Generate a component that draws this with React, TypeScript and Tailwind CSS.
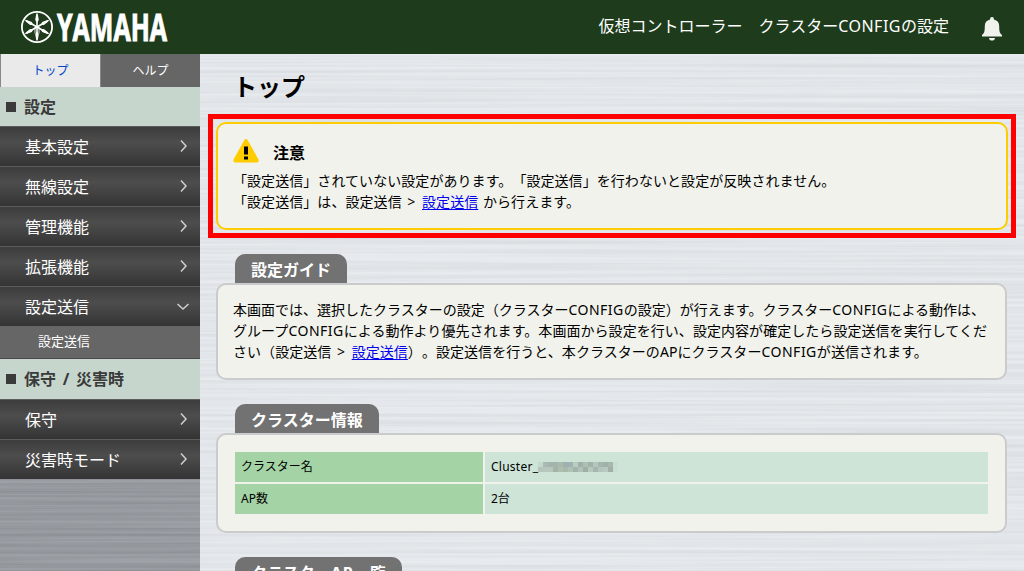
import React from "react";

const items = ["基本設定", "無線設定", "管理機能", "拡張機能", "設定送信"];
const lowerItems = ["保守", "災害時モード"];

function Chevron({ down = false }: { down?: boolean }) {
  return (
    <svg width="14" height="14" viewBox="0 0 14 14" fill="none" stroke="#cfcfcf" strokeWidth="1.5" className="mb-[2px]">
      {down ? <path d="M1.5 5 7 10l5.500-5" /> : <path d="M5 1.5 10 7l-5 5.5" />}
    </svg>
  );
}

function MenuItem({ label, open = false }: { label: string; open?: boolean }) {
  return (
    <div className="flex h-10 items-center justify-between border-t border-[#5c5c5c] bg-linear-to-b from-[#3d3d3d] via-[#4d4d4d] via-40% to-[#343434] pr-[10px] pl-[25px] text-base text-white">
      <span>{label}</span>
      <Chevron down={open} />
    </div>
  );
}

function Section({ label }: { label: string }) {
  return (
    <div className="flex items-center bg-[#c6d6cc] pl-[6px] text-base font-bold text-[#3a3a3a]">
      <span className="mr-[8px] size-[10px] bg-[#3a3a3a]" />
      <span className="whitespace-pre [word-spacing:2.5px]">{label}</span>
    </div>
  );
}

function Brushed({ id, base, opacity }: { id: string; base: string; opacity: number }) {
  return (
    <svg className="absolute inset-0 h-full w-full" preserveAspectRatio="none">
      <defs>
        <filter id={id} x="0" y="0" width="100%" height="100%" colorInterpolationFilters="sRGB">
          <feTurbulence type="fractalNoise" baseFrequency="0.002 0.3" numOctaves="3" seed="8" />
          <feColorMatrix type="matrix" values="1.6 0 0 0 -0.1  1.6 0 0 0 -0.1  1.6 0 0 0 -0.1  0 0 0 0 1" />
        </filter>
      </defs>
      <rect width="100%" height="100%" fill={base} />
      <rect width="100%" height="100%" filter={`url(#${id})`} opacity={opacity} />
    </svg>
  );
}

function Tab({ label }: { label: React.ReactNode }) {
  return (
    <h2 className="ml-[19px] flex h-[29px] w-fit items-center rounded-t-[10px] bg-[#727272] px-4 pt-[3px] text-base font-bold whitespace-nowrap text-white">
      {label}
    </h2>
  );
}

function Link({ children }: { children: React.ReactNode }) {
  return (
    <a href="#" className="text-[#0000ee] underline decoration-1 underline-offset-2">
      {children}
    </a>
  );
}

function Config() {
  return <span className="tracking-[0.5px]">CONFIG</span>;
}

function Gt() {
  return <span className="px-px tracking-[1px]"> &gt; </span>;
}

function Logo() {
  return (
    <svg width="160" height="54" viewBox="0 0 160 54">
      <g fill="none" stroke="#fff">
        <circle cx="17" cy="27" r="15.1" strokeWidth="1.8" />
        {[0, 60, 120, 180, 240, 300].map((a) => (
          <g key={a} transform={`rotate(${a} 17 27)`}>
            <path d="M17 27V15" strokeWidth="1.6" />
            <path d="M16.300 13.500h1.400l1.100 6.500-1.800 2.500-1.800-2.500z" fill="#fff" stroke="none" />
          </g>
        ))}
        <path d="M15 27v6.500M19 27v6.500" strokeWidth="0.8" />
      </g>
      <text
        x="37"
        y="41"
        fill="#fff"
        stroke="#fff"
        strokeWidth="1"
        fontFamily="Open Sans, sans-serif"
        fontWeight="700"
        fontSize="38"
        textLength="110"
        lengthAdjust="spacingAndGlyphs"
      >
        YAMAHA
      </text>
    </svg>
  );
}

export default function App() {
  return (
    <div className="flex h-[571px] w-[1024px] flex-col overflow-hidden font-['Noto_Sans','Noto_Sans_CJK_JP',sans-serif] text-black [text-spacing-trim:space-all]">
      <header className="flex h-[54px] shrink-0 items-center justify-between bg-[#1e3c1c] pr-[21px] pl-5">
        <Logo />
        <div className="flex items-center gap-[32px] text-base whitespace-nowrap text-white">
          <span className="-mt-[2px]">仮想コントローラー　クラスター<Config />の設定</span>
          <svg width="22" height="26" viewBox="0 0 22 26" fill="#f1f2eb" className="mt-[3px]">
            <path d="M11 1c1.200 0 1.900.8 1.900 1.900v.6c3.600.8 5.300 3.300 5.300 6.700 0 4.800.4 6.800 2.800 8.800v1.500H1V19c2.400-2 2.800-4 2.800-8.800 0-3.400 1.700-5.900 5.300-6.700v-.6C9.100 1.800 9.800 1 11 1zM8 22h6c-.3 1.800-1.400 2.600-3 2.600S8.300 23.800 8 22z" />
          </svg>
        </div>
      </header>
      <div className="flex min-h-0 flex-1">
        <aside className="relative w-[200px] shrink-0 overflow-hidden">
          <Brushed id="brush-dark" base="#93979d" opacity={0.1} />
          <nav className="relative">
            <div className="flex h-[33px] text-xs">
              <div className="flex w-[100px] items-center justify-center border-l border-[#888] bg-[#eaeaea] text-[#0047c8]">トップ</div>
              <div className="flex w-[100px] items-center justify-center border-l border-[#888] bg-[#666] text-white">ヘルプ</div>
            </div>
            <div className="grid h-[39px]"><Section label="設定" /></div>
            {items.map((t, i) => (
              <MenuItem key={t} label={t} open={i === 4} />
            ))}
            <div className="flex h-[33px] items-center border-b border-[#4a4a4a] bg-[#666] pl-[38px] text-[13px] text-white">設定送信</div>
            <div className="grid h-10"><Section label="保守 / 災害時" /></div>
            {lowerItems.map((t) => (
              <MenuItem key={t} label={t} />
            ))}
          </nav>
        </aside>
        <main className="relative min-w-0 flex-1 overflow-hidden">
          <Brushed id="brush-light" base="#e6eaee" opacity={0.06} />
          <div className="relative pr-[17px] pl-4 text-sm leading-[21px] whitespace-nowrap">
            <h1 className="flex h-[68px] items-center pb-[2px] pl-[17px] text-2xl font-bold">トップ</h1>
            <section className="relative -mr-px h-[108px] rounded-[10px] border-2 border-[#ffcc00] bg-[#f1f2eb] px-[15px] pt-[14px]">
              <div className="flex h-8 items-start">
                <svg width="26" height="24" viewBox="0 0 26 24" className="mt-px">
                  <path d="M13 2.200 23.700 21.500H2.300z" fill="#fc0" stroke="#fc0" strokeWidth="4" strokeLinejoin="round" />
                  <path d="M11 7.500h4v8h-4zM11 17.500h4v3h-4z" />
                </svg>
                <h3 className="mt-[3px] ml-[14px] text-base leading-[24px] font-bold">注意</h3>
              </div>
              <p className="tracking-[0.06px]">「設定送信」されていない設定があります。「設定送信」を行わないと設定が反映されません。</p>
              <p className="tracking-[0.06px]">「設定送信」は、設定送信<Gt /><Link>設定送信</Link><span className="ml-px"> から行えます。</span></p>
              <div className="pointer-events-none absolute -top-[10px] -right-[10px] -bottom-[10px] -left-[10px] border-[5px] border-[#ff0000]" />
            </section>
            <div className="h-6" />
            <Tab label="設定ガイド" />
            <section className="h-[97px] rounded-[10px] border-2 border-[#c9cbcd] bg-[#f1f2eb] px-[15px] pt-[14px]">
              <p>本画面では、選択したクラスターの設定（クラスター<Config />の設定）が行えます。クラスター<Config />による動作は、</p>
              <p className="tracking-[0.05px]">グループ<Config />による動作より優先されます。本画面から設定を行い、設定内容が確定したら設定送信を実行してくだ</p>
              <p className="tracking-[0.05px]">さい（設定送信<Gt /><Link>設定送信</Link>）。設定送信を行うと、本クラスターのAPにクラスター<Config />が送信されます。</p>
            </section>
            <div className="h-6" />
            <Tab label="クラスター情報" />
            <section className="h-[100px] rounded-[10px] border-2 border-[#c9cbcd] bg-[#f1f2eb] px-[17px] pt-[17px]">
              <div className="grid grid-cols-[248px_1fr] gap-0.5 text-xs">
                <div className="flex h-[30px] items-center bg-[#a4d4a5] pl-[6px]">クラスター名</div>
                <div className="flex h-[30px] items-center bg-[#cde4d7] pl-[6px]">
                  <span className="tracking-[0.25px]">Cluster_</span>
                  <Redacted />
                </div>
                <div className="flex h-[30px] items-center bg-[#a4d4a5] pl-[6px]">AP数</div>
                <div className="flex h-[30px] items-center bg-[#cde4d7] pl-[6px]">2台</div>
              </div>
            </section>
            <div className="h-6" />
            <Tab label={<span>クラスター<span className="tracking-[1px]">AP</span>一覧</span>} />
          </div>
        </main>
      </div>
    </div>
  );
}

const mosaic = [
  ["#c5d9cd", "#a9bab2", "#a3b4ae", "#a5b5ae", "#a9bba9", "#a0b0ae", "#9fb3b3", "#b9cdc2", "#9db0a9", "#adbfb3", "#a2b4aa", "#b5c7bc", "#a5b6ab", "#a0b1ac", "#a8b7ac", "#c9dfd3"],
  ["#b4c6bb", "#b6c8bd", "#b6c8bd", "#a4b4a9", "#acbfb0", "#a9baad", "#aec3b6", "#a3b5aa", "#b1c3b8", "#9fafa6", "#b7c9bd", "#a5b6ae", "#b2c6bb", "#b6cabf", "#a1b1a8", "#c9dfd3"],
];

function Redacted() {
  return (
    <svg width="80" height="12" className="shrink-0" shapeRendering="crispEdges">
      {mosaic.map((row, y) => row.map((c, x) => <rect key={`${x}-${y}`} x={x * 5} y={y * 5 + 1} width="5" height="5" fill={c} />))}
    </svg>
  );
}
